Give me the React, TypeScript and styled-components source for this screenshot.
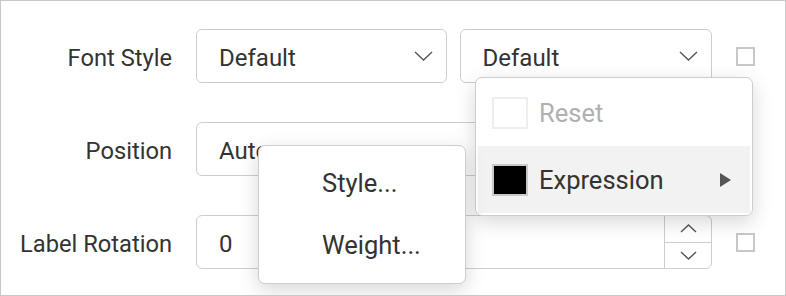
import React from "react";
import styled, { createGlobalStyle } from "styled-components";

const GlobalStyle = createGlobalStyle`
  html, body {
    margin: 0;
    padding: 0;
    background: #fff;
  }
  body {
    font-family: Roboto, "Liberation Sans", sans-serif;
    color: #333;
  }
`;

const Frame = styled.div`
  position: relative;
  box-sizing: border-box;
  width: 786px;
  height: 296px;
  border: 1px solid #c8c8c8;
  padding-top: 28px;
  overflow: hidden;
`;

const Rows = styled.div`
  display: flex;
  flex-direction: column;
  gap: 39px;
`;

const Row = styled.div`
  display: grid;
  grid-template-columns: 171px 516px 19px;
  column-gap: 24px;
  align-items: center;
  height: 54px;
`;

const Label = styled.div`
  text-align: right;
  font-size: 23.7px;
  padding-top: 3px;
  color: #333;
`;

const Pair = styled.div`
  display: flex;
  gap: 13px;
  height: 54px;
`;

const Field = styled.div<{ $w?: number }>`
  box-sizing: border-box;
  display: flex;
  align-items: center;
  justify-content: space-between;
  height: 54px;
  width: ${(p) => (p.$w ? `${p.$w}px` : "100%")};
  border: 1px solid #cdcdcd;
  border-radius: 6px;
  padding: 0 13px 0 22px;
  font-size: 24px;
  color: #333;
  background: #fff;
`;

const FieldText = styled.span`
  padding-top: 3px;
`;

const NumberField = styled(Field)`
  padding-right: 0;
`;

const Spin = styled.div`
  display: flex;
  flex-direction: column;
  width: 46px;
  height: 100%;
  border-left: 1px solid #cdcdcd;
`;

const SpinBtn = styled.div<{ $top?: boolean }>`
  flex: 1;
  display: flex;
  align-items: center;
  justify-content: center;
  border-bottom: ${(p) => (p.$top ? "1px solid #cdcdcd" : "none")};
`;

const Check = styled.div`
  box-sizing: border-box;
  width: 19px;
  height: 19px;
  border: 2px solid #c8c8c8;
`;

const Menu = styled.div<{ $x: number; $y: number; $w: number; $h: number }>`
  position: absolute;
  left: ${(p) => p.$x}px;
  top: ${(p) => p.$y}px;
  width: ${(p) => p.$w}px;
  height: ${(p) => p.$h}px;
  box-sizing: border-box;
  background: #fff;
  border: 1px solid #cdcdcd;
  border-radius: 7px;
  box-shadow: 0 6px 20px rgba(0, 0, 0, 0.16);
  padding: 1px 2px;
  display: flex;
  flex-direction: column;
`;

const PlainItem = styled.div`
  height: 62px;
  display: flex;
  align-items: center;
  padding-left: 61px;
  font-size: 25.5px;
  color: #333;
  &:first-child {
    margin-top: 5px;
  }
`;

const ColorItem = styled.div<{ $active?: boolean; $disabled?: boolean }>`
  height: 67px;
  display: flex;
  align-items: center;
  gap: 11px;
  padding: 0 19px 0 14px;
  font-size: 25.5px;
  color: ${(p) => (p.$disabled ? "#b0b0b0" : "#333")};
  background: ${(p) => (p.$active ? "#f2f2f2" : "transparent")};
`;

const Swatch = styled.span<{ $fill: string; $edge: string }>`
  box-sizing: border-box;
  width: 36px;
  height: 32px;
  background: ${(p) => p.$fill};
  border: 2px solid ${(p) => p.$edge};
`;

const ItemText = styled.span`
  flex: 1;
`;

const Chevron = ({ up = false, w = 19, h = 10 }: { up?: boolean; w?: number; h?: number }) => (
  <svg width={w} height={h} viewBox={`0 0 ${w} ${h}`} fill="none">
    <polyline
      points={
        up
          ? `1,${h - 1} ${w / 2},1 ${w - 1},${h - 1}`
          : `1,1 ${w / 2},${h - 1} ${w - 1},1`
      }
      stroke="#555"
      strokeWidth="1.4"
    />
  </svg>
);

const Arrow = () => (
  <svg width="11" height="14" viewBox="0 0 11 14">
    <polygon points="0,0 11,7 0,14" fill="#555" />
  </svg>
);

export default function App() {
  return (
    <>
      <GlobalStyle />
      <Frame>
        <Rows>
          <Row>
            <Label>Font Style</Label>
            <Pair>
              <Field $w={251}>
                <FieldText>Default</FieldText>
                <Chevron />
              </Field>
              <Field $w={253}>
                <FieldText>Default</FieldText>
                <Chevron />
              </Field>
            </Pair>
            <Check />
          </Row>
          <Row>
            <Label>Position</Label>
            <Field>
              <FieldText>Auto</FieldText>
              <Chevron />
            </Field>
            <span />
          </Row>
          <Row>
            <Label>Label Rotation</Label>
            <NumberField>
              <FieldText>0</FieldText>
              <Spin>
                <SpinBtn $top>
                  <Chevron up w={17} h={9} />
                </SpinBtn>
                <SpinBtn>
                  <Chevron w={17} h={9} />
                </SpinBtn>
              </Spin>
            </NumberField>
            <Check />
          </Row>
        </Rows>

        <Menu $x={474} $y={76} $w={278} $h={139}>
          <ColorItem $disabled>
            <Swatch $fill="#fff" $edge="#eeeeee" />
            <ItemText>Reset</ItemText>
          </ColorItem>
          <ColorItem $active>
            <Swatch $fill="#000" $edge="#c8c8c8" />
            <ItemText>Expression</ItemText>
            <Arrow />
          </ColorItem>
        </Menu>

        <Menu $x={257} $y={144} $w={208} $h={139}>
          <PlainItem>Style...</PlainItem>
          <PlainItem>Weight...</PlainItem>
        </Menu>
      </Frame>
    </>
  );
}
